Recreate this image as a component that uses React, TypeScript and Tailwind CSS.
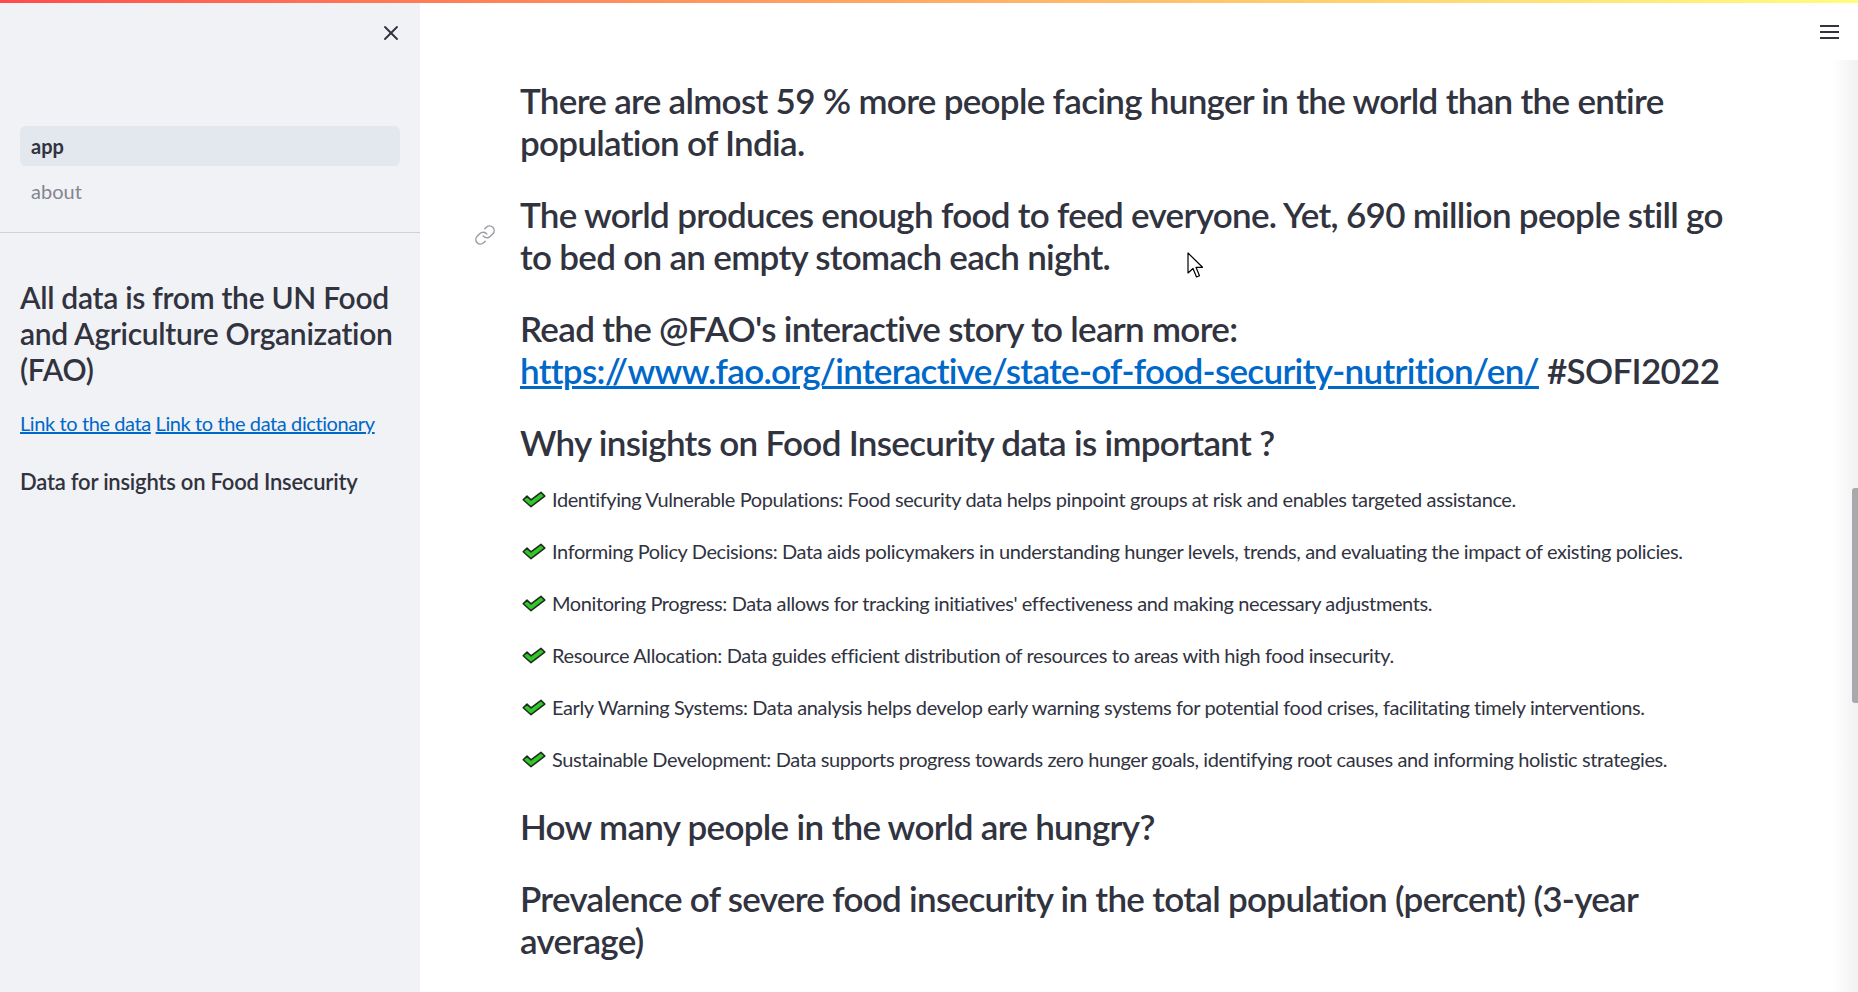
import { Link, X } from "lucide-react";

const REASONS = [
  "Identifying Vulnerable Populations: Food security data helps pinpoint groups at risk and enables targeted assistance.",
  "Informing Policy Decisions: Data aids policymakers in understanding hunger levels, trends, and evaluating the impact of existing policies.",
  "Monitoring Progress: Data allows for tracking initiatives' effectiveness and making necessary adjustments.",
  "Resource Allocation: Data guides efficient distribution of resources to areas with high food insecurity.",
  "Early Warning Systems: Data analysis helps develop early warning systems for potential food crises, facilitating timely interventions.",
  "Sustainable Development: Data supports progress towards zero hunger goals, identifying root causes and informing holistic strategies.",
];

function Check() {
  return (
    <svg width="24" height="17" viewBox="0 0 24 16" className="shrink-0">
      <path
        d="M1.2 8.3 L5 4.6 L9 8.4 L19 0.8 L22.8 4.6 L9 15.2 Z"
        fill="#31c62a"
        stroke="#1f2a1c"
        strokeWidth="1.5"
        strokeLinejoin="round"
      />
    </svg>
  );
}

function Cursor() {
  return (
    <svg width="17" height="28" viewBox="0 0 17 28" className="absolute left-[1187px] top-[252px]">
      <path
        d="M1 1 L1 21 L6 16.5 L9.5 25 L12.5 23.7 L9 15.3 L15.5 15.3 Z"
        fill="white"
        stroke="black"
        strokeWidth="1.2"
        strokeLinejoin="round"
      />
    </svg>
  );
}

const h3 = "text-[35px] font-semibold leading-[42px] tracking-[-0.02em]";

export default function App() {
  return (
    <div className="relative flex h-[992px] w-[1858px] overflow-hidden bg-white font-['Lato',sans-serif] text-[#31333f]">
      {/* decoration strip across the top */}
      <div className="absolute inset-x-0 top-0 z-10 h-[3px] bg-gradient-to-r from-[#ff4b4b] to-[#fffd80]" />

      <aside className="flex w-[420px] shrink-0 flex-col bg-[#f0f2f6]">
        <div className="flex h-[66px] items-center justify-end pr-[17px]">
          <X size={24} strokeWidth={1.9} className="text-[#31333f]" />
        </div>
        <nav className="flex flex-col gap-[5px] px-5 pt-[60px] pb-[21px]">
          <div className="flex h-10 items-center rounded-md bg-[#e3e7ee] px-[11px] text-[20px] font-bold">
            app
          </div>
          <div className="flex h-10 items-center px-[11px] text-[20px] text-[#83858f]">about</div>
        </nav>
        <div className="border-t border-[#cfd1d6]" />
        <div className="flex flex-col px-5 pt-[46px]">
          <h3 className="text-[30px] font-semibold leading-[36px] tracking-[-0.01em]">
            All data is from the UN Food and Agriculture Organization (FAO)
          </h3>
          <p className="mt-[20px] text-[20px] leading-[32px] tracking-[-0.02em]">
            <a className="text-[#0068c9] underline">Link to the data</a>{" "}
            <a className="text-[#0068c9] underline">Link to the data dictionary</a>
          </p>
          <h5 className="mt-[27px] text-[22px] font-semibold leading-[32px] tracking-[-0.01em]">
            Data for insights on Food Insecurity
          </h5>
        </div>
      </aside>

      <main className="relative flex flex-1 flex-col">
        <header className="flex h-[60px] shrink-0 items-center justify-end pr-[19px]">
          <div className="flex w-[19px] flex-col gap-[4px] pt-[4px]">
            <span className="h-[2px] bg-[#31333f]" />
            <span className="h-[2px] bg-[#31333f]" />
            <span className="h-[2px] bg-[#31333f]" />
          </div>
        </header>

        <div className="flex flex-col pl-[100px] pr-[110px] pt-[19px]">
          <h3 className={h3}>
            There are almost 59 % more people facing hunger in the world than the entire population of India.
          </h3>
          <div className="relative mt-[30px]">
            <Link size={22} strokeWidth={1.6} className="absolute left-[-46px] top-[31px] text-[#9a9ca3]" />
            <h3 className={h3}>
              The world produces enough food to feed everyone. Yet, 690 million people still go to bed on an empty
              stomach each night.
            </h3>
          </div>
          <h3 className={`${h3} mt-[30px]`}>
            Read the @FAO's interactive story to learn more:{" "}
            <a className="text-[#0068c9] underline">https://www.fao.org/interactive/state-of-food-security-nutrition/en/</a>{" "}
            #SOFI2022
          </h3>
          <h3 className={`${h3} mt-[30px]`}>Why insights on Food Insecurity data is important ?</h3>

          <ul className="mt-[20px] flex flex-col gap-[20px]">
            {REASONS.map((r) => (
              <li key={r} className="flex items-center gap-[6px] pl-[2px] text-[20px] leading-[32px] tracking-[-0.02em]">
                <Check />
                {r}
              </li>
            ))}
          </ul>

          <h3 className={`${h3} mt-[30px]`}>How many people in the world are hungry?</h3>
          <h3 className={`${h3} mt-[30px]`}>
            Prevalence of severe food insecurity in the total population (percent) (3-year average)
          </h3>
        </div>

        {/* scrollbar */}
        <div className="absolute bottom-0 right-0 top-[60px] w-[26px] bg-gradient-to-r from-white to-[#f1f1f1]" />
        <div className="absolute right-0 top-[488px] h-[215px] w-[6px] rounded-l-[3px] bg-[#a8a8ad]" />
      </main>

      <Cursor />
    </div>
  );
}
